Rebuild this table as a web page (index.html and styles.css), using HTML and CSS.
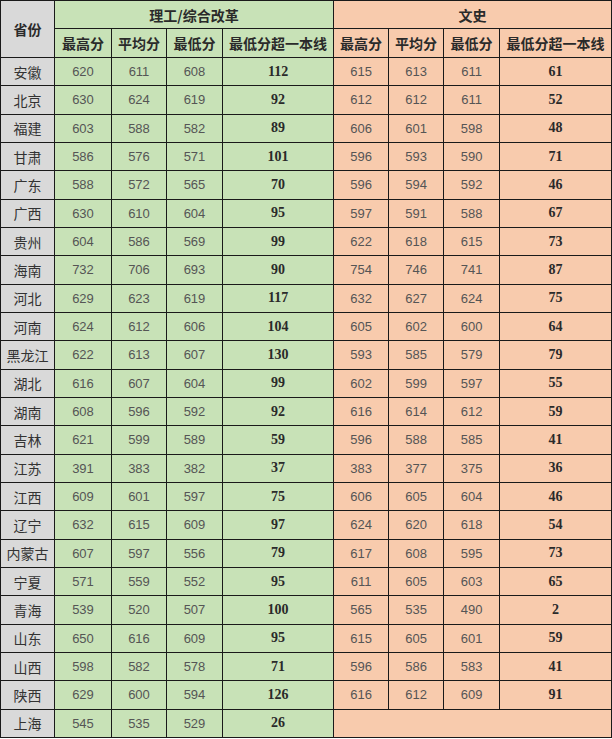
FILE: index.html
```html
<!DOCTYPE html>
<html lang="zh">
<head>
<meta charset="utf-8">
<link rel="stylesheet" href="styles.css">
</head>
<body>
<table class="score">
<colgroup>
<col class="c-prov"><col class="c-n1"><col class="c-n2"><col class="c-n3"><col class="c-w">
<col class="c-n4"><col class="c-n5"><col class="c-n6"><col class="c-w2">
</colgroup>
<thead>
<tr class="h1">
<th rowspan="2" class="prov">省份</th>
<th colspan="4" class="g">理工/综合改革</th>
<th colspan="4" class="p">文史</th>
</tr>
<tr class="h2">
<th class="g">最高分</th><th class="g">平均分</th><th class="g">最低分</th><th class="g">最低分超一本线</th>
<th class="p">最高分</th><th class="p">平均分</th><th class="p">最低分</th><th class="p">最低分超一本线</th>
</tr>
</thead>
<tbody id="body"></tbody>
</table>
<script src="app.js"></script>
</body>
</html>
```

FILE: app.js
```js
const rows = [
["安徽",620,611,608,112,615,613,611,61],
["北京",630,624,619,92,612,612,611,52],
["福建",603,588,582,89,606,601,598,48],
["甘肃",586,576,571,101,596,593,590,71],
["广东",588,572,565,70,596,594,592,46],
["广西",630,610,604,95,597,591,588,67],
["贵州",604,586,569,99,622,618,615,73],
["海南",732,706,693,90,754,746,741,87],
["河北",629,623,619,117,632,627,624,75],
["河南",624,612,606,104,605,602,600,64],
["黑龙江",622,613,607,130,593,585,579,79],
["湖北",616,607,604,99,602,599,597,55],
["湖南",608,596,592,92,616,614,612,59],
["吉林",621,599,589,59,596,588,585,41],
["江苏",391,383,382,37,383,377,375,36],
["江西",609,601,597,75,606,605,604,46],
["辽宁",632,615,609,97,624,620,618,54],
["内蒙古",607,597,556,79,617,608,595,73],
["宁夏",571,559,552,95,611,605,603,65],
["青海",539,520,507,100,565,535,490,2],
["山东",650,616,609,95,615,605,601,59],
["山西",598,582,578,71,596,586,583,41],
["陕西",629,600,594,126,616,612,609,91],
["上海",545,535,529,26]
];
const tb = document.getElementById('body');
let html = '';
for (const r of rows) {
  html += '<tr><td class="prov name">' + r[0] + '</td>';
  for (let i = 1; i <= 3; i++) html += '<td class="g num">' + r[i] + '</td>';
  html += '<td class="g big">' + r[4] + '</td>';
  if (r.length > 5) {
    for (let i = 5; i <= 7; i++) html += '<td class="p num">' + r[i] + '</td>';
    html += '<td class="p big">' + r[8] + '</td>';
  } else {
    html += '<td class="p" colspan="4"></td>';
  }
  html += '</tr>';
}
tb.innerHTML = html;
```

FILE: styles.css
```css
html, body {
  margin: 0;
  padding: 0;
  background: #ffffff;
}
.score {
  border-collapse: collapse;
  table-layout: fixed;
  width: 611px;
  margin-left: 0;
  font-family: "Liberation Sans", "Noto Sans CJK SC", sans-serif;
}
.c-prov { width: 54px; }
.c-n1 { width: 57px; }
.c-n2 { width: 55px; }
.c-n3 { width: 56px; }
.c-w { width: 111px; }
.c-n4 { width: 55px; }
.c-n5 { width: 55px; }
.c-n6 { width: 56px; }
.c-w2 { width: 112px; }
.score th, .score td {
  border: 1px solid #1a1a1a;
  padding: 0;
  text-align: center;
  vertical-align: middle;
  overflow: hidden;
  white-space: nowrap;
}
.score th {
  font-family: "Noto Sans CJK SC", sans-serif;
  font-weight: 700;
  font-size: 14px;
  color: #2a2a2a;
}
.h1 { height: 28px; }
.h2 { height: 29px; }
.score tbody tr { height: 28.34px; }
.prov { background: #d9d9d9; }
.g { background: #c8e2b7; }
.p { background: #f8cbad; }
.name {
  font-family: "Noto Sans CJK SC", sans-serif;
  font-size: 14px;
  color: #333333;
}
.num {
  font-size: 13px;
  color: #555555;
}
.big {
  font-family: "Liberation Serif", serif;
  font-weight: 700;
  font-size: 14px;
  color: #2a2a2a;
}
```
